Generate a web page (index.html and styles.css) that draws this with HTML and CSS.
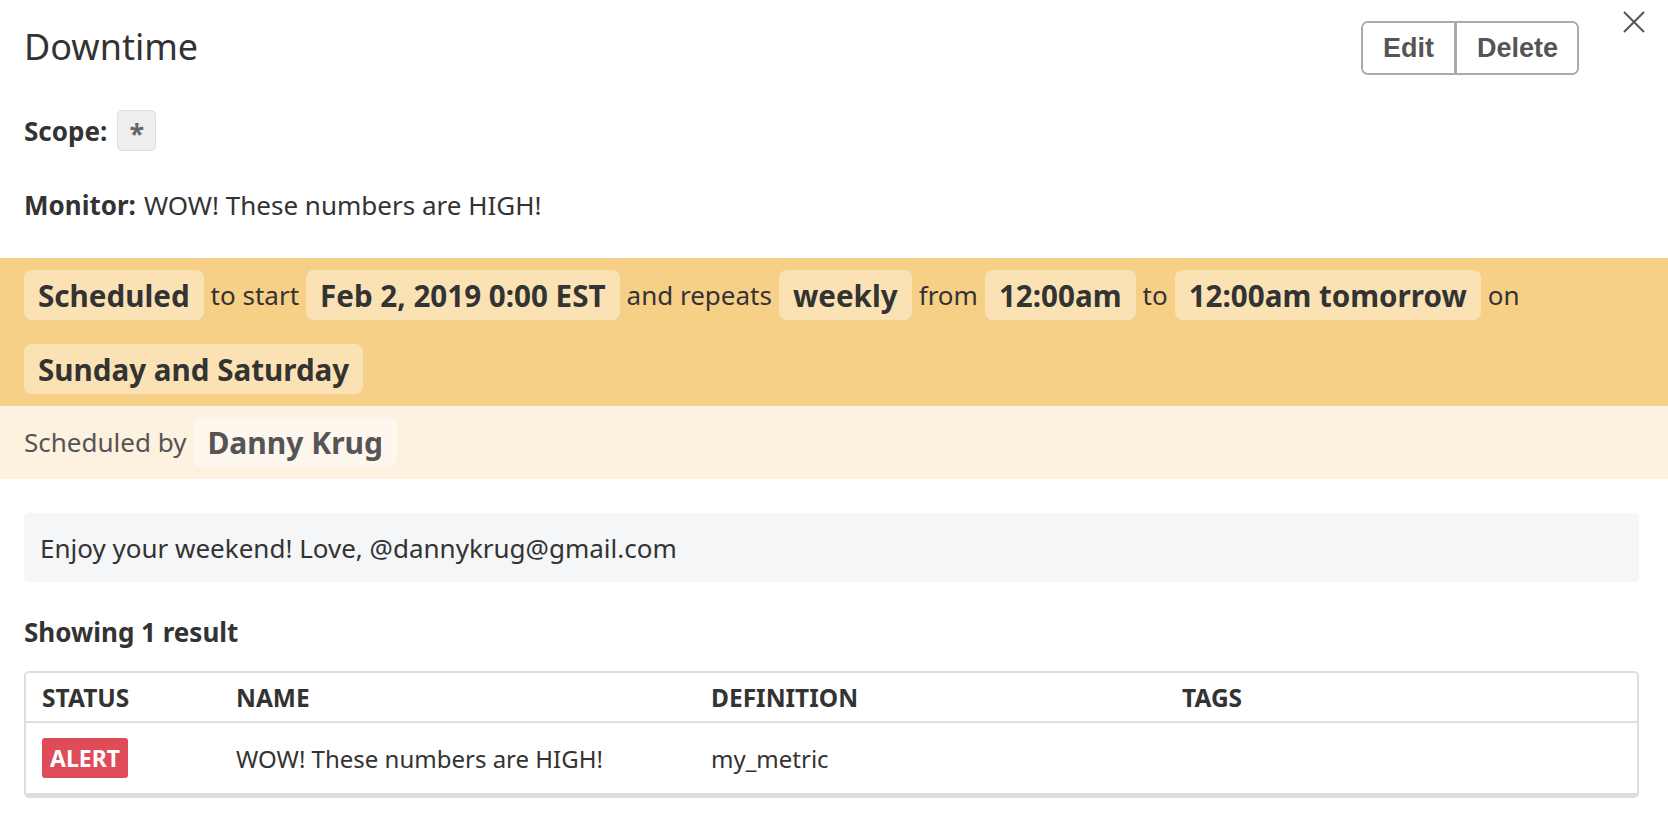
FILE: index.html
```html
<!DOCTYPE html>
<html>
<head>
<meta charset="utf-8">
<link rel="stylesheet" href="styles.css">
</head>
<body>
<div class="modal">
  <div class="header">
    <h1 class="title">Downtime</h1>
    <div class="actions">
      <div class="btn-group">
        <button class="btn">Edit</button>
        <button class="btn">Delete</button>
      </div>
      <button class="close" aria-label="Close">
        <svg width="24" height="24" viewBox="0 0 24 24"><path d="M2 2 L22 22 M22 2 L2 22" stroke="#555" stroke-width="2" fill="none"/></svg>
      </button>
    </div>
  </div>
  <div class="line scope"><b>Scope:</b> <span class="scope-chip">*</span></div>
  <div class="line monitor"><b>Monitor:</b> WOW! These numbers are HIGH!</div>
  <div class="schedule">
    <span class="chip">Scheduled</span><span class="word">to start</span><span class="chip">Feb 2, 2019 0:00 EST</span><span class="word">and repeats</span><span class="chip">weekly</span><span class="word">from</span><span class="chip">12:00am</span><span class="word">to</span><span class="chip">12:00am tomorrow</span><span class="word">on</span><span class="chip">Sunday and Saturday</span>
  </div>
  <div class="by">
    <span class="word">Scheduled by</span><span class="chip chip-light">Danny Krug</span>
  </div>
  <div class="note">Enjoy your weekend! Love, @dannykrug@gmail.com</div>
  <div class="count">Showing 1 result</div>
  <div class="table">
    <div class="row head">
      <div class="c status">STATUS</div>
      <div class="c name">NAME</div>
      <div class="c def">DEFINITION</div>
      <div class="c tags">TAGS</div>
    </div>
    <div class="row body-row">
      <div class="c status"><span class="alert">ALERT</span></div>
      <div class="c name">WOW! These numbers are HIGH!</div>
      <div class="c def">my_metric</div>
      <div class="c tags"></div>
    </div>
  </div>
</div>
</body>
</html>
```
FILE: styles.css
```css
* { box-sizing: border-box; }
body {
  margin: 0;
  font-family: "Noto Sans", "Open Sans", sans-serif;
  color: #333;
  background: #fff;
  font-size: 26px;
}
.modal { padding: 0 0 30px; }
.header {
  display: flex;
  justify-content: space-between;
  align-items: flex-start;
  padding: 21px 0 0 24px;
  height: 110px;
}
.title {
  margin: 0;
  margin-top: 2px;
  font-size: 36px;
  font-weight: 400;
  line-height: 48px;
}
.actions { display: flex; align-items: flex-start; }
.btn-group {
  display: flex;
  border: 2px solid #aaa;
  border-radius: 7px;
  overflow: hidden;
  height: 54px;
}
.btn {
  background: #fff;
  border: 0;
  font-family: "Liberation Sans", Arial, sans-serif;
  font-weight: 700;
  font-size: 27px;
  color: #555;
  padding: 0 20px;
  height: 100%;
}
.btn + .btn { border-left: 3px solid #aaa; padding: 0 19px 0 20px; }
.close {
  background: none;
  border: 0;
  padding: 0;
  margin: -11px 22px 0 43px;
  width: 24px;
  height: 24px;
}
.line { padding: 0 24px; display: flex; align-items: center; }
.line b { font-weight: 700; margin-right: 10px; }
.scope { height: 41px; }
.scope-chip {
  display: inline-flex;
  justify-content: center;
  align-items: center;
  width: 39px;
  height: 41px;
  background: #eee;
  border: 1px solid #ddd;
  border-radius: 5px;
  color: #666;
  font-weight: 700;
  font-size: 27px;
  padding-top: 6px;
}
.monitor { margin-top: 34px; height: 40px; }
.monitor b { margin-right: 8px; }
.schedule {
  margin-top: 33px;
  background: #f7d088;
  padding: 12px 24px;
  display: flex;
  flex-wrap: wrap;
  align-items: center;
  row-gap: 24px;
}
.chip {
  display: inline-flex;
  align-items: center;
  height: 50px;
  padding: 0 14px;
  background: #fbe2b4;
  border-radius: 8px;
  font-weight: 700;
  font-size: 29.6px;
}
.word { margin: 0 7px; font-size: 26px; }
.by {
  background: #fdf1df;
  padding: 11px 24px 12px;
  display: flex;
  align-items: center;
  color: #555;
}
.by .word { margin-left: 0; margin-right: 7px; }
.chip-light { background: #fef7ed; color: #555; padding: 0 14px; font-size: 30px; }
.note {
  margin: 34px 29px 0 24px;
  background: #f5f6f8;
  border-radius: 5px;
  height: 69px;
  display: flex;
  align-items: center;
  padding: 0 16px;
}
.count {
  margin: 31px 24px 0;
  font-weight: 700;
  height: 38px;
  display: flex;
  align-items: center;
}
.table {
  margin: 20px 29px 0 24px;
  border: 2px solid #dedee2;
  border-bottom-width: 5px;
  border-radius: 5px;
}
.row { display: grid; grid-template-columns: 194px 475px 471px 1fr; }
.head { height: 50px; align-items: center; border-bottom: 2px solid #dedee2; }
.head .c { font-weight: 700; font-size: 24.5px; }
.body-row { height: 70px; align-items: center; font-size: 24px; }
.c { padding-left: 16px; }
.alert {
  display: inline-flex;
  align-items: center;
  justify-content: center;
  background: #e04b58;
  color: #fff;
  font-weight: 700;
  font-size: 23px;
  height: 40px;
  padding: 0 8px;
  border-radius: 3px;
}
```
